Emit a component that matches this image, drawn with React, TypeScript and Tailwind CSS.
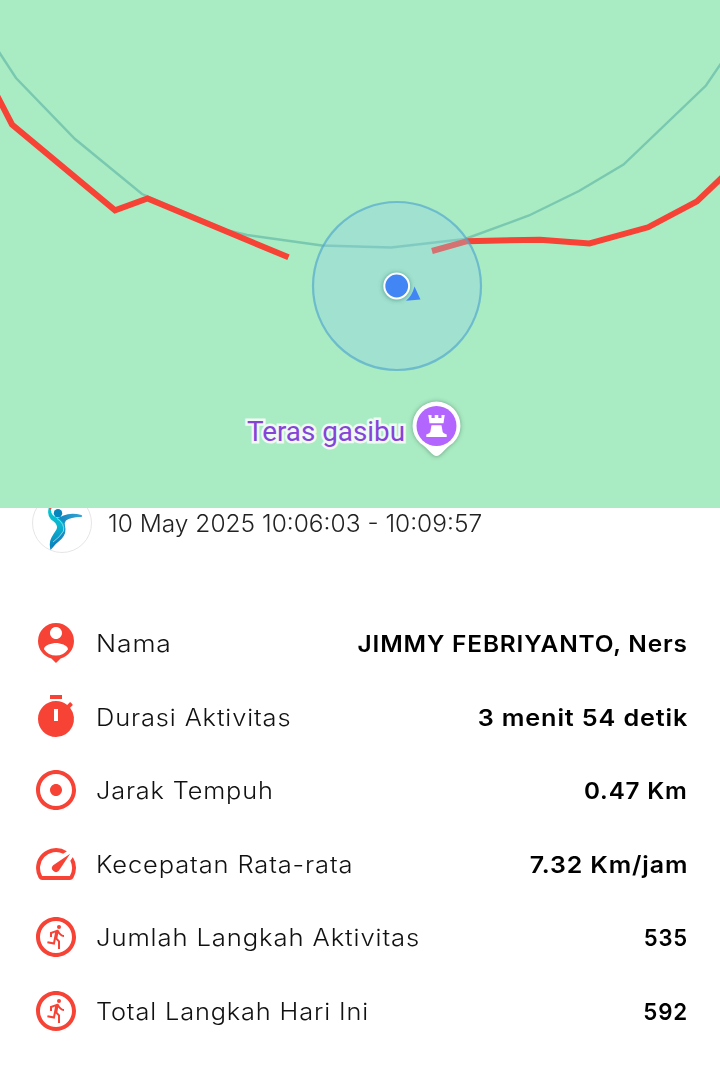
import type { ReactNode } from 'react';
import { MdAdjust, MdOutlineRunCircle, MdSpeed } from 'react-icons/md';

type Stat = {
  label: string;
  value: string;
  icon: ReactNode;
  labelClass: string;
  valueClass: string;
};

const PersonPinIcon = () => (
  <svg viewBox="0 0 24 24" fill="currentColor" className="size-12">
    <path d="M12 2a9 9 0 0 0-9 9c0 4.17 2.84 7.67 6.69 8.69L12 22l2.31-2.31C18.16 18.67 21 15.17 21 11a9 9 0 0 0-9-9zm0 2c1.66 0 3 1.34 3 3s-1.34 3-3 3-3-1.34-3-3 1.34-3 3-3zm0 14.3a7.2 7.2 0 0 1-6-3.22c.03-1.99 4-3.08 6-3.08 1.99 0 5.97 1.09 6 3.08a7.2 7.2 0 0 1-6 3.22z" />
  </svg>
);

const TimerIcon = () => (
  <svg viewBox="0 0 24 24" fill="currentColor" fillRule="evenodd" className="size-12">
    <path d="M15 1H9v2h6V1zm-4 13h2V8h-2v6zm8.03-6.61 1.42-1.42c-.43-.51-.9-.99-1.41-1.41l-1.42 1.42A8.96 8.96 0 0 0 12 4c-4.97 0-9 4.03-9 9s4.02 9 9 9a8.99 8.99 0 0 0 7.03-14.61z" />
  </svg>
);

const stats: Stat[] = [
  {
    label: 'Nama',
    value: 'JIMMY FEBRIYANTO, Ners',
    icon: <PersonPinIcon />,
    labelClass: 'scale-x-[1.125]',
    valueClass: 'scale-x-[1.039]',
  },
  {
    label: 'Durasi Aktivitas',
    value: '3 menit 54 detik',
    icon: <TimerIcon />,
    labelClass: 'scale-x-[1.082]',
    valueClass: 'scale-x-[1.073]',
  },
  {
    label: 'Jarak Tempuh',
    value: '0.47 Km',
    icon: <MdAdjust className="size-12" />,
    labelClass: 'scale-x-[1.075]',
    valueClass: 'scale-x-[1.03]',
  },
  {
    label: 'Kecepatan Rata-rata',
    value: '7.32 Km/jam',
    icon: <MdSpeed className="size-12" />,
    labelClass: 'scale-x-[1.084]',
    valueClass: 'scale-x-[1.062]',
  },
  {
    label: 'Jumlah Langkah Aktivitas',
    value: '535',
    icon: <MdOutlineRunCircle className="size-12" />,
    labelClass: 'scale-x-[1.091]',
    valueClass: 'scale-x-[0.94]',
  },
  {
    label: 'Total Langkah Hari Ini',
    value: '592',
    icon: <MdOutlineRunCircle className="size-12" />,
    labelClass: 'scale-x-[1.078]',
    valueClass: 'scale-x-[0.95]',
  },
];

const RouteMap = () => (
  <div className="relative z-10 h-[508px] overflow-hidden bg-[#a9ebc3]">
    <svg viewBox="0 0 720 508" fill="none" className="block h-[508px] w-[720px]">
      <defs>
        <filter id="soft" x="-50%" y="-50%" width="200%" height="200%">
          <feGaussianBlur stdDeviation="2" />
        </filter>
      </defs>
      <path
        d="M-2 50.500L16 78L75 139L142 194L228 230.500L247 235L322 245.500L391 247.500L465 239L529 215.500L579 191L623.500 164.500L706 85.500L722 62"
        stroke="#79c8b0"
        strokeWidth="2.400"
      />
      <path
        d="M-4 93.500L12 124.500L115 210.300L147.500 198.500L288.500 257.300"
        stroke="#f64336"
        strokeWidth="6"
      />
      <path
        d="M432 251L467 241.200L540 239.700L589.500 243.500L648 227.300L697 201.300L724 175.500"
        stroke="#f64336"
        strokeWidth="6"
      />
      <circle cx="397" cy="286" r="84" fill="#92cfe8" fillOpacity=".33" stroke="#4fa6cf" strokeOpacity=".66" strokeWidth="2.200" />
      <circle cx="396.500" cy="286.500" r="14" fill="#1f5b50" fillOpacity=".4" filter="url(#soft)" />
      <circle cx="396.700" cy="286" r="13.400" fill="#fff" />
      <circle cx="396.700" cy="286" r="11.400" fill="#4286f5" />
      <path d="M414.500 286.500L420.500 299.500L406 300.700Q412 296 414.500 286.500Z" fill="#4286f5" />
      <path
        d="M436.500 456.500C432 456.500 429 450 420 443A24 24 0 1 1 453 443C444 450 441 456.500 436.500 456.500Z"
        fill="#3d6a50"
        fillOpacity=".55"
        filter="url(#soft)"
      />
      <path
        d="M436.500 456C432 456 429 449 420 443A24 24 0 1 1 453 443C444 449 441 456 436.500 456Z"
        fill="#fff"
      />
      <circle cx="436.500" cy="426" r="20" fill="#b366fd" />
      <path
        d="M428.300 415H431.500V418H434.700V415H438.300V418H441.500V415H444.700L443.500 423.200H429.500ZM431.500 425.200H441.500L442.700 432Q443 433.300 446.700 434.500V437H426.300V434.500Q430 433.300 430.300 432Z"
        fill="#fff"
      />
    </svg>
    <div className="absolute left-[247px] top-[412px] whitespace-nowrap font-['Roboto'] text-[27.8px] leading-[40px] text-[#8544d8] [-webkit-text-stroke:5px_#eefaf3] [paint-order:stroke_fill]">
      Teras gasibu
    </div>
  </div>
);

const Avatar = () => (
  <svg viewBox="0 0 60 60" className="size-[60px] flex-none">
    <defs>
      <linearGradient id="arm" x1="0" x2="1">
        <stop offset="0" stopColor="#087bb8" />
        <stop offset="1" stopColor="#35a6d4" />
      </linearGradient>
      <linearGradient id="body" x1="0" y1="0" x2="0" y2="1">
        <stop offset="0" stopColor="#00c9d2" />
        <stop offset=".45" stopColor="#0bb4d0" />
        <stop offset="1" stopColor="#087db9" />
      </linearGradient>
    </defs>
    <circle cx="30" cy="30" r="29.500" fill="#fff" stroke="#dedede" strokeWidth=".8" />
    <path d="M23 25.500Q27 25 31.500 22.500Q39 19.500 49.500 22Q51 23 49.500 24Q39 23.800 34 27.500Q31.800 30 33 33Q35 40 29.500 46Q23 51 18.500 57Q22 42 30 37Q30 29 23 25.500Z" fill="url(#arm)" />
    <path d="M17 14Q14.500 22 19 26.500C24 30 27 33 23.500 38C20 43 17.500 47 17.800 52Q18 55 18.500 57C21 49 28 45 32 38Q34 30 27 25.500C20 23 18.500 20 19 14Z" fill="url(#body)" />
    <path d="M25 25.500Q33 31 31.500 38Q28 44 21 49" fill="none" stroke="#d9f4fb" strokeWidth=".6" />
    <circle cx="26" cy="20.300" r="4.200" fill="#0786bd" />
    <circle cx="18.500" cy="15.500" r="1" fill="#ee4b45" />
  </svg>
);

const StatRow = ({ label, value, icon, labelClass, valueClass }: Stat) => (
  <div className="flex h-[73.5px] items-center text-[23.5px] leading-8 tracking-[0.8px]">
    <div className="size-12 flex-none text-[#f64336]">{icon}</div>
    <div className={`ml-4 origin-left whitespace-nowrap pt-0.5 font-light text-[#111] ${labelClass}`}>{label}</div>
    <div className={`ml-auto origin-right whitespace-nowrap pt-0.5 font-[570] text-black ${valueClass}`}>{value}</div>
  </div>
);

const App = () => (
  <div className="h-[1092px] w-[720px] overflow-hidden bg-white font-['Inter',sans-serif]">
    <RouteMap />
    <div className="-mt-[15px] flex h-[60px] items-center px-8">
      <Avatar />
      <div className="ml-4 origin-left scale-x-[1.043] whitespace-nowrap pt-0.5 text-[23.5px] font-light leading-8 text-[#222]">
        10 May 2025 10:06:03 - 10:09:57
      </div>
    </div>
    <div className="mt-[53.5px] px-8">
      {stats.map((stat) => (
        <StatRow key={stat.label} {...stat} />
      ))}
    </div>
  </div>
);

export default App;
